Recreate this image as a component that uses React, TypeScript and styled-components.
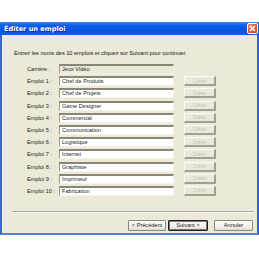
import React from "react";
import styled, { createGlobalStyle } from "styled-components";

const Global = createGlobalStyle`
  html, body { margin: 0; padding: 0; background: #fff; }
  body { font-family: "Liberation Sans", Arial, sans-serif; }
`;

const Window = styled.div`
  margin-top: 22px;
  width: 259px;
  height: 213px;
  display: flex;
  flex-direction: column;
  box-sizing: border-box;
  border-left: 2px solid #3a62d8;
  border-right: 2px solid #3a62d8;
  border-bottom: 2px solid #5a7fe0;
  background: #ece9d8;
`;

const TitleBar = styled.div`
  height: 13px;
  display: flex;
  align-items: center;
  justify-content: space-between;
  margin: 0 -2px;
  padding: 0 1px 0 4px;
  background: linear-gradient(#3d8cf5 0%, #0a5fe8 25%, #0554e3 70%, #0b5ee6 100%);
`;

const Title = styled.span`
  color: #fff;
  font-family: "DejaVu Sans", sans-serif;
  font-weight: bold;
  font-size: 6.6px;
  text-shadow: 1px 1px 0 #0a2f9a;
`;

const Close = styled.div`
  width: 11px;
  height: 11px;
  box-sizing: border-box;
  border: 1px solid #fff;
  border-radius: 2px;
  background: radial-gradient(circle at 30% 30%, #f39a7c, #d9482a 70%);
  display: flex;
  align-items: center;
  justify-content: center;
`;

const Body = styled.div`
  flex: 1;
  display: flex;
  flex-direction: column;
  padding: 15px 3px 0 12px;
`;

const Intro = styled.div`
  font-size: 5.6px;
  color: #111;
  line-height: 7px;
  margin-bottom: 7px;
`;

const Form = styled.div`
  display: grid;
  grid-template-columns: 32px 115px 42px;
  row-gap: 2.2px;
  align-items: center;
  padding-left: 13px;
`;

const Label = styled.span`
  font-size: 5.6px;
  color: #222;
`;

const Field = styled.div<{ $readonly?: boolean }>`
  height: 10px;
  box-sizing: border-box;
  border-top: 2px solid #8a8676;
  border-left: 1px solid #9c998a;
  border-right: 1px solid #f4f2ea;
  border-bottom: 1px solid #f4f2ea;
  background: ${(p) => (p.$readonly ? "#ece9d8" : "#fff")};
  font-size: 5.6px;
  color: #222;
  line-height: 7px;
  padding-left: 2px;
  white-space: nowrap;
  overflow: hidden;
`;

const CreateBtn = styled.div`
  height: 10px;
  margin-left: 10px;
  box-sizing: border-box;
  border-top: 1px solid #fbfaf5;
  border-left: 1px solid #fbfaf5;
  border-right: 2px solid #a29f90;
  border-bottom: 2px solid #a29f90;
  background: #ebe8d9;
  color: #c2bfb1;
  font-size: 5.4px;
  display: flex;
  align-items: center;
  justify-content: center;
`;

const Empty = styled.div``;

const Separator = styled.div`
  margin: 15px 0 0 -2px;
  height: 0;
  border-top: 1px solid #aca899;
  border-bottom: 1px solid #fff;
`;

const Footer = styled.div`
  display: flex;
  justify-content: flex-end;
  gap: 2px;
  padding: 7px 1px 0 0;
`;

const NavBtn = styled.div<{ $default?: boolean; $w: number; $ml?: number }>`
  width: ${(p) => p.$w}px;
  height: 11px;
  box-sizing: border-box;
  margin-left: ${(p) => p.$ml ?? 0}px;
  border: ${(p) => (p.$default ? "1px solid #222" : "1px solid #8d8a7c")};
  box-shadow: ${(p) => (p.$default ? "inset 0 0 0 1px #777" : "none")};
  border-radius: 1px;
  background: linear-gradient(#fbfbf8, #efeee8 70%, #dedbcd);
  font-size: 5.6px;
  color: #222;
  display: flex;
  align-items: center;
  justify-content: center;
`;

const jobs = [
  "Chef de Produits",
  "Chef de Projets",
  "Game Designer",
  "Commercial",
  "Communication",
  "Logistique",
  "Internet",
  "Graphiste",
  "Imprimeur",
  "Fabrication",
];

export default function App() {
  return (
    <>
      <Global />
      <Window>
        <TitleBar>
          <Title>Éditer un emploi</Title>
          <Close>
            <svg width="7" height="7" viewBox="0 0 7 7">
              <path d="M1 1 L6 6 M6 1 L1 6" stroke="#fff" strokeWidth="1.3" />
            </svg>
          </Close>
        </TitleBar>
        <Body>
          <Intro>Entrez les noms des 10 emplois et cliquez sur Suivant pour continuer.</Intro>
          <Form>
            <Label>Carrière :</Label>
            <Field $readonly>Jeux Vidéo</Field>
            <Empty />
            {jobs.map((j, i) => (
              <React.Fragment key={j}>
                <Label>Emploi {i + 1} :</Label>
                <Field>{j}</Field>
                <CreateBtn>Créer</CreateBtn>
              </React.Fragment>
            ))}
          </Form>
          <Separator />
          <Footer>
            <NavBtn $w={38}>&lt; Précédent</NavBtn>
            <NavBtn $w={40} $default>Suivant &gt;</NavBtn>
            <NavBtn $w={39} $ml={4}>Annuler</NavBtn>
          </Footer>
        </Body>
      </Window>
    </>
  );
}
